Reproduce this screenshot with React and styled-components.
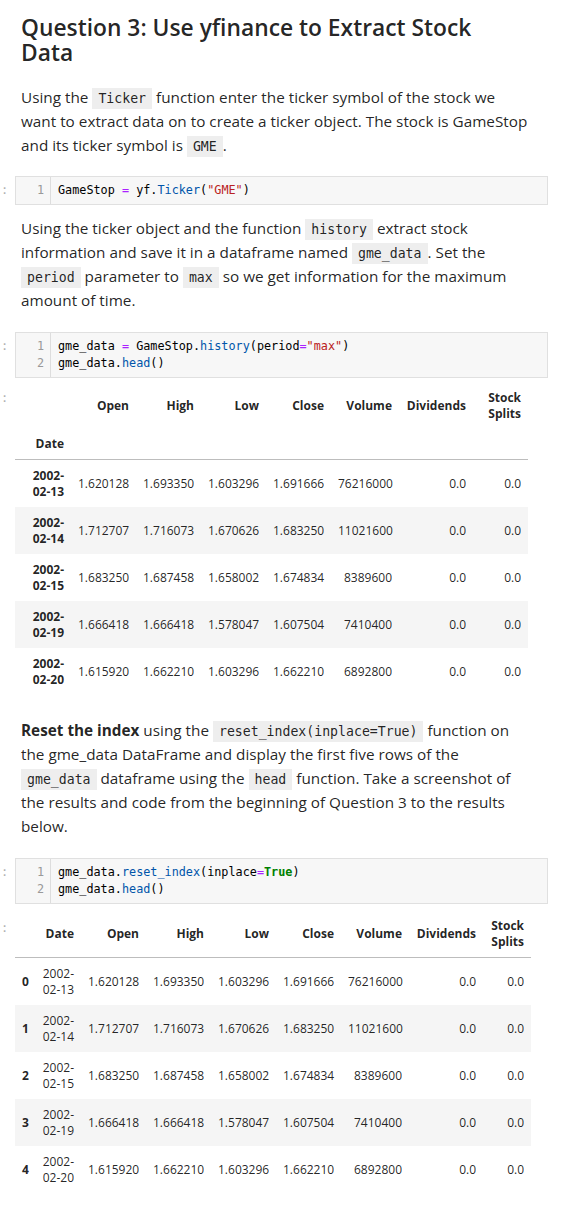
import React from "react";
import styled, { createGlobalStyle } from "styled-components";

const GlobalStyle = createGlobalStyle`
  html, body { margin: 0; padding: 0; background: #ffffff; }
  body {
    font-family: "Open Sans", "Noto Sans", sans-serif;
    color: rgba(0, 0, 0, 0.87);
    -webkit-font-smoothing: antialiased;
  }
`;

const MONO = `"DejaVu Sans Mono", "Liberation Mono", monospace`;

const Page = styled.div`
  width: 561px;
  box-sizing: border-box;
  padding: 15px 13px 20px 0;
  display: flex;
  flex-direction: column;
`;

const Cell = styled.div`
  display: grid;
  grid-template-columns: 15px 1fr;
  margin-top: ${(p) => p.$mt || 0}px;
`;

const Prompt = styled.div`
  font-family: ${MONO};
  font-size: 12px;
  color: #b0b0b0;
  line-height: 17px;
  padding-top: ${(p) => p.$pt || 0}px;
  padding-left: 1px;
`;

const Markdown = styled.div`
  padding-left: 6px;
  width: 516px;
  box-sizing: border-box;
`;

const Heading = styled.h2`
  margin: 0;
  font-size: 22.8px;
  line-height: 25px;
  font-weight: 600;
  color: rgba(0, 0, 0, 0.87);
`;

const Anchor = styled.a`
  visibility: hidden;
  margin-left: 8px;
  color: #1976d2;
  text-decoration: none;
`;

const Para = styled.p`
  margin: ${(p) => p.$mt || 0}px 0 0 0;
  font-size: 15.3px;
  line-height: 24px;
`;

const InlineCode = styled.code`
  font-family: ${MONO};
  font-size: 13.2px;
  line-height: 1;
  background: #eeeeee;
  padding: 3px 6px;
  color: rgba(0, 0, 0, 0.87);
`;

const CodeBox = styled.div`
  display: grid;
  grid-template-columns: 35px 1fr;
  background: #f7f7f7;
  border: 1px solid #e0e0e0;
  font-family: ${MONO};
  font-size: 11.8px;
  line-height: 17px;
`;

const Gutter = styled.div`
  border-right: 1px solid #dddddd;
  padding: 5px 6px 5px 0;
  text-align: right;
  color: #999999;
`;

const Lines = styled.div`
  padding: 5px 0 5px 7px;
  color: #000000;
  white-space: pre;
`;

const Op = styled.span`
  color: #aa22ff;
`;
const Prop = styled.span`
  color: #0055aa;
`;
const Str = styled.span`
  color: #ba2121;
`;
const Kw = styled.span`
  color: #008000;
  font-weight: bold;
`;

const Table = styled.table`
  border-collapse: collapse;
  border-spacing: 0;
  table-layout: fixed;
  font-size: 12px;
  line-height: 16px;
  color: rgba(0, 0, 0, 0.87);
  width: ${(p) => p.$w}px;
`;

const Col = styled.col`
  width: ${(p) => p.$w}px;
`;

const Head = styled.thead`
  border-bottom: 1px solid #bdbdbd;
`;

const Th = styled.th`
  text-align: right;
  vertical-align: middle;
  padding: ${(p) => (p.$head ? "7px 7px" : "7.5px 7px")};
  font-weight: bold;
`;

const Td = styled.td`
  text-align: right;
  vertical-align: middle;
  padding: 7.5px 7px;
  font-weight: normal;
`;

const Row = styled.tr`
  background: ${(p) => (p.$shade ? "#f5f5f5" : "transparent")};
`;

const Output = styled.div`
  margin-top: ${(p) => p.$mt || 0}px;
`;

const data = [
  ["2002-02-13", "1.620128", "1.693350", "1.603296", "1.691666", "76216000", "0.0", "0.0"],
  ["2002-02-14", "1.712707", "1.716073", "1.670626", "1.683250", "11021600", "0.0", "0.0"],
  ["2002-02-15", "1.683250", "1.687458", "1.658002", "1.674834", "8389600", "0.0", "0.0"],
  ["2002-02-19", "1.666418", "1.666418", "1.578047", "1.607504", "7410400", "0.0", "0.0"],
  ["2002-02-20", "1.615920", "1.662210", "1.603296", "1.662210", "6892800", "0.0", "0.0"],
];

const cols = ["Open", "High", "Low", "Close", "Volume", "Dividends", "Stock Splits"];

const DateText = ({ value }) => {
  const [y, ...rest] = value.split("-");
  return (
    <>
      {y}-<br />
      {rest.join("-")}
    </>
  );
};

const CodeCell = ({ mt, lines }) => (
  <Cell $mt={mt}>
    <Prompt $pt={6}>:</Prompt>
    <CodeBox>
      <Gutter>
        {lines.map((_, i) => (
          <div key={i}>{i + 1}</div>
        ))}
      </Gutter>
      <Lines>
        {lines.map((l, i) => (
          <div key={i}>{l}</div>
        ))}
      </Lines>
    </CodeBox>
  </Cell>
);

const IndexedTable = () => {
  const widths = [56, 65, 65, 65, 65, 68, 74, 55];
  return (
    <Table $w={widths.reduce((a, b) => a + b, 0)}>
      <colgroup>
        {widths.map((w, i) => (
          <Col key={i} $w={w} />
        ))}
      </colgroup>
      <Head>
        <tr>
          <Th $head />
          {cols.map((c) => (
            <Th $head key={c}>{c}</Th>
          ))}
        </tr>
        <tr>
          <Th $head>Date</Th>
          {cols.map((c) => (
            <Th $head key={c} />
          ))}
        </tr>
      </Head>
      <tbody>
        {data.map((r, i) => (
          <Row key={r[0]} $shade={i % 2 === 1}>
            <Th>
              <DateText value={r[0]} />
            </Th>
            {r.slice(1).map((v, j) => (
              <Td key={j}>{v}</Td>
            ))}
          </Row>
        ))}
      </tbody>
    </Table>
  );
};

const ResetTable = () => {
  const widths = [19, 47, 65, 65, 65, 65, 68, 74, 48];
  return (
    <Table $w={widths.reduce((a, b) => a + b, 0)}>
      <colgroup>
        {widths.map((w, i) => (
          <Col key={i} $w={w} />
        ))}
      </colgroup>
      <Head>
        <tr>
          <Th $head />
          <Th $head>Date</Th>
          {cols.map((c) => (
            <Th $head key={c}>{c}</Th>
          ))}
        </tr>
      </Head>
      <tbody>
        {data.map((r, i) => (
          <Row key={r[0]} $shade={i % 2 === 1}>
            <Th>{i}</Th>
            <Td>
              <DateText value={r[0]} />
            </Td>
            {r.slice(1).map((v, j) => (
              <Td key={j}>{v}</Td>
            ))}
          </Row>
        ))}
      </tbody>
    </Table>
  );
};

export default function App() {
  return (
    <>
      <GlobalStyle />
      <Page>
        <Cell>
          <div />
          <Markdown>
            <Heading>
              Question 3: Use yfinance to Extract Stock Data
              <Anchor href="#Question-3">¶</Anchor>
            </Heading>
            <Para $mt={20}>
              Using the <InlineCode>Ticker</InlineCode> function enter the ticker symbol of the stock we
              want to extract data on to create a ticker object. The stock is GameStop and its ticker
              symbol is <InlineCode>GME</InlineCode>.
            </Para>
          </Markdown>
        </Cell>

        <CodeCell
          mt={19}
          lines={[
            <>
              GameStop <Op>=</Op> yf.<Prop>Ticker</Prop>(<Str>"GME"</Str>)
            </>,
          ]}
        />

        <Cell $mt={11}>
          <div />
          <Markdown>
            <Para>
              Using the ticker object and the function <InlineCode>history</InlineCode> extract stock
              information and save it in a dataframe named <InlineCode>gme_data</InlineCode>. Set the{" "}
              <InlineCode>period</InlineCode> parameter to <InlineCode>max</InlineCode> so we get
              information for the maximum amount of time.
            </Para>
          </Markdown>
        </Cell>

        <CodeCell
          mt={20}
          lines={[
            <>
              gme_data <Op>=</Op> GameStop.<Prop>history</Prop>(period<Op>=</Op>
              <Str>"max"</Str>)
            </>,
            <>
              gme_data.<Prop>head</Prop>()
            </>,
          ]}
        />

        <Cell>
          <Prompt $pt={12}>:</Prompt>
          <Output $mt={5}>
            <IndexedTable />
          </Output>
        </Cell>

        <Cell $mt={23}>
          <div />
          <Markdown>
            <Para>
              <b>Reset the index</b> using the <InlineCode>reset_index(inplace=True)</InlineCode>{" "}
              function on the gme_data DataFrame and display the first five rows of the{" "}
              <InlineCode>gme_data</InlineCode> dataframe using the <InlineCode>head</InlineCode>{" "}
              function. Take a screenshot of the results and code from the beginning of Question 3 to
              the results below.
            </Para>
          </Markdown>
        </Cell>

        <CodeCell
          mt={20}
          lines={[
            <>
              gme_data.<Prop>reset_index</Prop>(inplace<Op>=</Op>
              <Kw>True</Kw>)
            </>,
            <>
              gme_data.<Prop>head</Prop>()
            </>,
          ]}
        />

        <Cell>
          <Prompt $pt={16}>:</Prompt>
          <Output $mt={7}>
            <ResetTable />
          </Output>
        </Cell>
      </Page>
    </>
  );
}
